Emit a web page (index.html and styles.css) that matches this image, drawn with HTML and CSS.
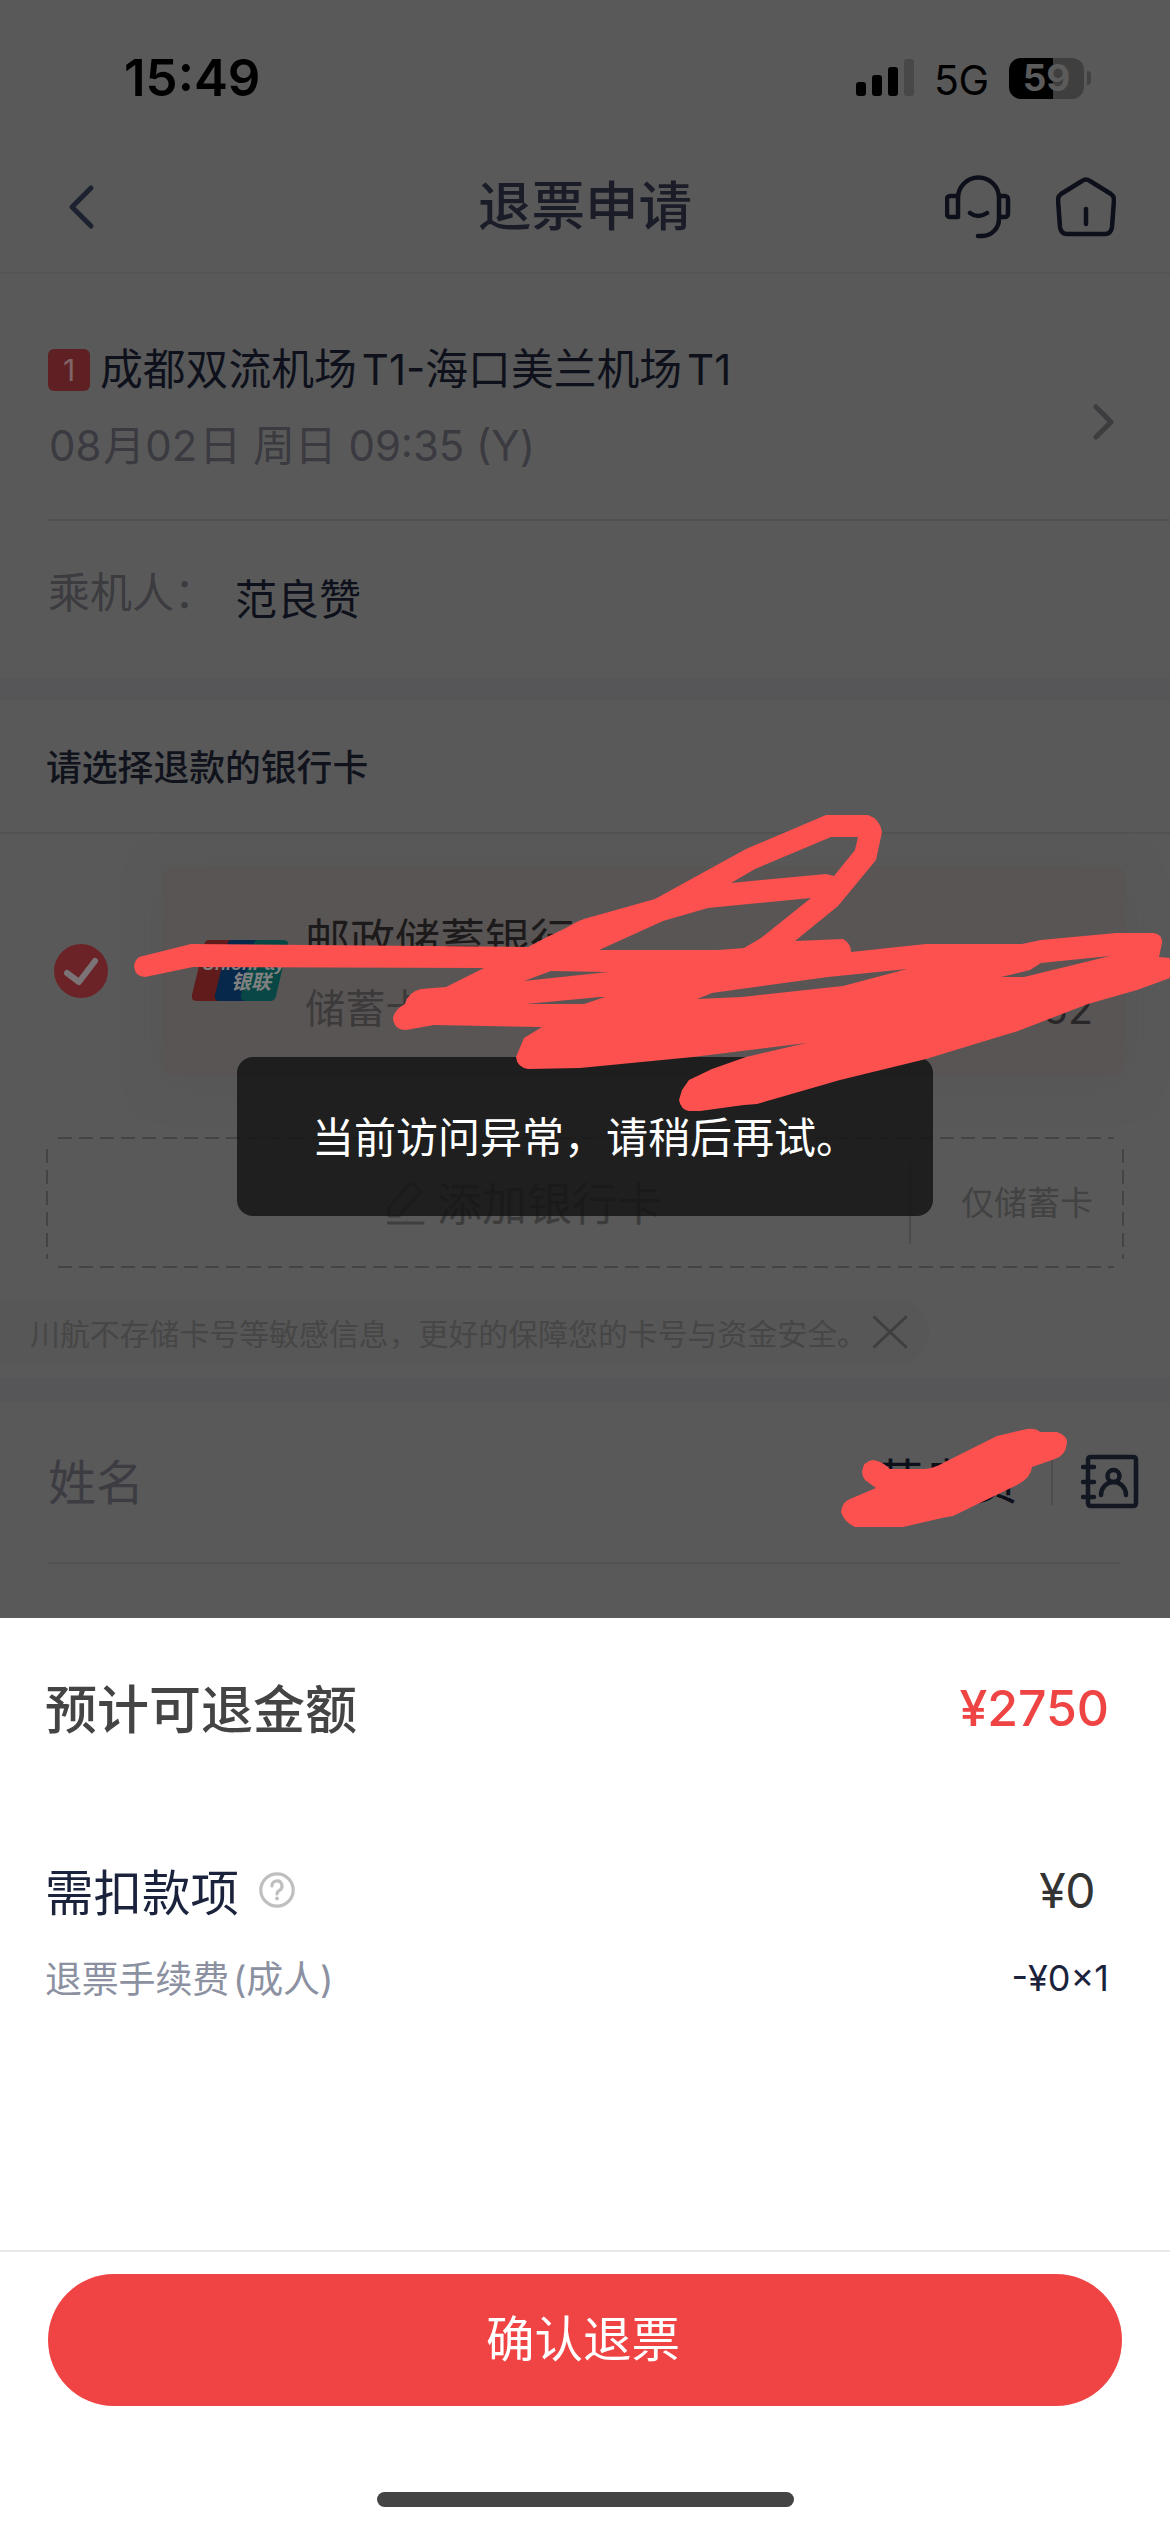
FILE: index.html
```html
<!DOCTYPE html>
<html lang="zh-CN">
<head>
<meta charset="utf-8">
<title>退票申请</title>
<link rel="stylesheet" href="styles.css">
</head>
<body>
<div class="screen">
  <div class="status">
    <span class="clock">15:49</span>
    <div class="status-right">
      <svg class="signal" width="58" height="38" viewBox="0 0 58 38">
        <rect x="0" y="23" width="10" height="14" rx="3"/>
        <rect x="16" y="16" width="10" height="21" rx="3"/>
        <rect x="32" y="8" width="10" height="29" rx="3"/>
        <rect x="48" y="0" width="10" height="37" rx="3" fill="#484848"/>
      </svg>
      <span class="net">5G</span>
      <div class="battery"><span>59</span></div>
      <i class="battery-tip"></i>
    </div>
  </div>

  <header class="nav">
    <svg class="back line" width="30" height="46" viewBox="0 0 30 46"><path d="M24 4 5 23l19 19"/></svg>
    <h1>退票申请</h1>
    <div class="nav-icons">
      <svg class="line" width="66" height="64" viewBox="0 0 66 64">
        <path d="M13 42H5a3 3 0 0 1-3-3V24a3 3 0 0 1 3-3h8V42V23a20 20 0 0 1 41 0V44a17 17 0 0 1-17 17H33M54 21h6a3 3 0 0 1 3 3v15a3 3 0 0 1-3 3h-6M25 38q8 6 17 0"/>
      </svg>
      <svg class="line" width="60" height="60" viewBox="0 0 60 60">
        <path d="M26 4 5 17q-3 2-3 6l2 27q1 7 7 7h38q6 0 7-7l2-27q0-4-3-6L34 4q-4-3-8 0zM30 32v15"/>
      </svg>
    </div>
  </header>

  <section class="flight">
    <div class="flight-info">
      <div>
        <div class="route"><b class="badge">1</b><span>成都双流机场<em>T1-</em>海口美兰机场<em>T1</em></span></div>
        <div class="when">08<i>月</i>02<i>日</i> 周日 09:35 (Y)</div>
      </div>
      <svg class="more line" width="24" height="36" viewBox="0 0 24 36"><path d="m4 3 15 15L4 33"/></svg>
    </div>
    <div class="passenger"><span class="label">乘机人：</span><span class="person">范良赞</span></div>
  </section>

  <h2 class="pick">请选择退款的银行卡</h2>

  <section class="cards">
    <div class="card-row">
      <svg class="check line" width="54" height="54" viewBox="0 0 54 54"><circle cx="27" cy="27" r="27"/><path d="m13 29 12 9 16-21"/></svg>
      <div class="card">
        <svg class="unionpay" width="96" height="62" viewBox="0 0 96 62">
          <path d="M17 0H44L30 61H5Q-1 61 0 55L12 5Q13 0 17 0z" fill="#611b1a"/>
          <path d="M40 0H70L57 61H27Q22 61 23 55L35 5Q36 0 40 0z" fill="#08284b"/>
          <path d="M66 0H91Q97 0 96 5L84 56Q83 61 78 61H54Q48 61 49 55L61 5Q62 0 66 0z" fill="#084745"/>
          <text x="10" y="30" class="up-en">UnionPay</text>
          <text x="39" y="49" class="up-cn">银联</text>
        </svg>
        <div class="card-text">
          <div class="bank">邮政储蓄银行</div>
          <div class="card-meta"><span>储蓄卡</span><span class="tail">52</span></div>
        </div>
      </div>
    </div>
    <div class="add">
      <svg class="dash line" width="1078" height="132" viewBox="0 0 1078 132"><path d="M12 1H1068M12 130H1068M1 12V122M1077 12V122"/></svg>
      <div class="add-main">
        <svg class="line" width="38" height="44" viewBox="0 0 38 44"><path d="M2 35V26L21 4q3-3 6 0l4 4q3 3 0 6L12 35H2M0 42h36"/></svg>
        <span>添加银行卡</span>
      </div>
      <div class="add-side">仅储蓄卡</div>
    </div>
    <div class="notice">
      <span>川航不存储卡号等敏感信息，更好的保障您的卡号与资金安全。</span>
      <svg class="line" width="34" height="32" viewBox="0 0 34 32"><path d="m1 1 32 30M33 1 1 31"/></svg>
    </div>
  </section>

  <section class="name-row">
    <span class="name-label">姓名</span>
    <div class="name-value">
      <span>范良赞</span>
      <svg class="line" width="58" height="56" viewBox="0 0 58 56">
        <path d="M10 3h42q3 0 3 3v43q0 3-3 3H10q-3 0-3-3V6q0-3 3-3zM2 13h11M2 28h11M2 43h11M20 41a12.500 13 0 0 1 25 0"/><circle cx="32.500" cy="22" r="6"/>
      </svg>
    </div>
  </section>

  <section class="sheet">
    <div class="row total"><span>预计可退金额</span><span class="price">¥2750</span></div>
    <div class="row fee">
      <span class="fee-title">需扣款项
        <svg class="line" width="36" height="36" viewBox="0 0 36 36"><circle cx="18" cy="18" r="16.200"/><path d="M13 14a5 5 0 1 1 7.500 4.300q-2.500 1.500-2.500 3.700"/><circle class="dot" cx="18" cy="26.500" r="1.900"/></svg>
      </span>
      <span class="zero">¥0</span>
    </div>
    <div class="row detail"><span>退票手续费<em>(</em>成人)</span><span class="calc">-¥0×1</span></div>
    <div class="footer">
      <button class="confirm">确认退票</button>
      <div class="home-bar"></div>
    </div>
  </section>

  <div class="toast">当前访问异常，请稍后再试。</div>

  <svg class="scribble" width="1170" height="2532" viewBox="0 0 1170 2532">
    <path d="M134 966Q135 960 139 957L191 944 528 947Q546 937 566 928 578 920 591 917L655 899 746 849 826 815H868Q880 819 882 832L876 860 838 906 795 941 843 939Q851 943 851 952L926 944H1022L1041 940 1116 933H1154Q1163 935 1162 943L1159 957 1170 958V978L1137 990 1088 1004 1018 1031 975 1044 926 1059 840 1080 757 1104 744 1105 700 1111H689Q681 1110 679 1100L682 1090 689 1080 712 1069 746 1057 806 1043 693 1057 580 1068 528 1069Q517 1067 516 1057L524 1038 542 1027 486 1026 434 1025 406 1030Q394 1030 393 1018 395 1009 405 1004 408 992 421 989L446 987 484 968 193 967 145 977Q135 977 134 966zM731 883 755 869 831 837H858L855 850 834 876 826 874zM708 908 811 898 761 938 744 948 719 950H599L663 921zM524 981 551 971 608 972zM526 1004 600 997H605L584 1004zM697 999 712 993 828 977 907 969 843 986 742 997zM1001 977 1030 970 1041 963 1110 956 1024 977z"/>
    <path d="M862 1472Q863 1461 873 1460 882 1461 890 1469H925Q935 1468 943 1463L997 1436 1027 1429Q1036 1428 1040 1432H1057Q1068 1436 1067 1443 1066 1455 1055 1459L1032 1467Q1031 1478 1017 1485L953 1516 942 1518 903 1527H855Q844 1522 841 1512 842 1502 850 1499L876 1488 865 1480Q862 1476 862 1472z"/>
  </svg>
</div>
</body>
</html>
```
FILE: styles.css
```css
* { box-sizing: border-box; margin: 0; padding: 0; }
body {
  width: 1170px;
  height: 2532px;
  overflow: hidden;
  font-family: "Inter", "Noto Sans CJK SC", sans-serif;
  background: #595959;
}
em, i { font-style: normal; }
svg { display: block; flex: none; }
.line path, .line circle { fill: none; stroke-linecap: round; stroke-linejoin: round; }
.screen { position: relative; display: flex; flex-direction: column; height: 2532px; white-space: nowrap; }

/* status bar */
.status { display: flex; justify-content: space-between; align-items: center; height: 130px; padding: 26px 79px 0 124px; }
.clock { font-size: 51px; font-weight: 600; line-height: 60px; color: #000; }
.status-right { display: flex; align-items: center; }
.net { margin-left: 20px; font-size: 41px; line-height: 50px; font-weight: 400; letter-spacing: -.5px; margin-top: 4px; width: 55px; }
.battery { display: flex; justify-content: center; align-items: center; width: 75px; height: 41px; margin-left: 20px; border-radius: 12px; background: linear-gradient(90deg, #000 44px, #3f3f3f 44px); color: #5b5b5b; font-size: 37px; font-weight: 700; line-height: 40px; }
.battery-tip { width: 4px; height: 14px; margin-left: 3px; border-radius: 0 4px 4px 0; background: #424242; }

/* navigation */
.nav { display: flex; align-items: center; justify-content: space-between; height: 144px; padding: 12px 54px 0 67px; border-bottom: 2px solid #545454; }
.nav h1 { font-size: 53.500px; font-weight: 500; line-height: 64px; color: #1a1c28; margin-left: 128px; }
.nav-icons { display: flex; align-items: center; gap: 45px; }
.back path { stroke: #1d2230; stroke-width: 5; }
.nav-icons path { stroke: #0d101b; stroke-width: 4.500; }

/* flight */
.flight { height: 426px; padding-left: 48px; border-bottom: 22px solid #565659; }
.flight-info { display: flex; justify-content: space-between; align-items: center; height: 247px; padding: 45px 54px 24px 0; border-bottom: 2px solid #515151; }
.route { display: flex; align-items: center; height: 60px; gap: 10px; font-size: 42.800px; line-height: 60px; color: #0e111b; }
.route span { height: 60px; }
.route em { font-size: 42px; padding-left: 5px; }
.badge { display: flex; align-items: center; justify-content: center; width: 42px; height: 42px; border-radius: 6px; background: #5f2023; color: #7f6568; font-size: 30px; font-weight: 400; }
.when { height: 60px; margin-top: 15px; padding-left: 1px; font-size: 41.900px; line-height: 62px; color: #3a3a40; }
.when i { padding-left: 2px; }
.more { margin-top: 30px; }
.more path { stroke: #3d3d3f; stroke-width: 5; }
.passenger { display: flex; font-size: 42px; line-height: 60px; padding-top: 42px; }
.label { width: 187px; color: #3b3b40; }
.person { margin-top: 7px; color: #0e111b; }
.pick { height: 134px; padding-left: 46px; font-size: 35.800px; font-weight: 500; line-height: 137px; color: #10131c; border-bottom: 2px solid #525252; }

/* bank cards */
.cards { height: 568px; padding-top: 32px; border-bottom: 24px solid #565658; }
.card-row { display: flex; align-items: center; height: 210px; padding-left: 54px; }
.check circle { fill: #6c2327; stroke: none; }
.check path { stroke: #7b7476; stroke-width: 6; }
.card { display: flex; width: 964px; height: 210px; margin-left: 54px; border-radius: 14px; background: #595554; box-shadow: 0 8px 36px rgba(86, 85, 86, .7); padding: 0 35px 0 30px; }
.unionpay { margin-top: 74px; }
.unionpay text { font-weight: 700; font-style: italic; fill: #818181; }
.up-en { font-family: "Liberation Sans", Arial, sans-serif; font-size: 18px; }
.up-cn { font-size: 20px; }
.card-text { flex: 1; margin-left: 17px; padding-top: 44px; }
.bank { font-size: 45px; line-height: 62px; color: #1c1a1a; }
.card-meta { display: flex; justify-content: space-between; margin-top: 7px; font-size: 40.200px; line-height: 60px; color: #3d3a3b; }
.tail { font-size: 41px; margin-right: -2px; color: #292728; }
.add { position: relative; display: flex; width: 1078px; height: 132px; margin: 61px 0 0 46px; align-items: center; }
.dash { position: absolute; inset: 0; }
.dash path { stroke: #444; stroke-width: 2; stroke-dasharray: 14 7; stroke-linecap: butt; }
.add-main { display: flex; align-items: center; justify-content: center; gap: 12px; width: 865px; height: 82px; padding-left: 94px; border-right: 2px solid #4b4b4b; font-size: 45px; color: #3c3c3c; }
.add-main span { margin-top: -4px; }
.add-main path { stroke: #3f3f3f; stroke-width: 3; }
.add-side { padding-left: 50px; margin-top: -4px; font-size: 33px; color: #424242; }
.notice { display: flex; align-items: center; width: 929px; height: 64px; margin-top: 31px; padding-left: 30px; gap: 6px; border-radius: 0 32px 32px 0; background: #575757; font-size: 29.900px; color: #464646; }
.notice path { stroke: #3f3f3f; stroke-width: 3; }

/* name */
.name-row { display: flex; justify-content: space-between; height: 162px; margin-left: 48px; width: 1073px; border-bottom: 2px solid #535353; font-size: 48px; line-height: 161px; }
.name-label { color: #3c3c42; }
.name-value { display: flex; align-items: center; margin-right: -18px; color: #0d101a; }
.name-value span { height: 46px; line-height: 46px; padding-right: 32px; margin-right: 28px; border-right: 2px solid #4c4c4c; }
.name-value path, .name-value circle { stroke: #131722; stroke-width: 4.500; }

/* refund sheet */
.sheet { display: flex; flex-direction: column; height: 914px; margin-top: auto; background: #fff; }
.row { display: flex; align-items: center; justify-content: space-between; padding: 0 61px 0 45px; }
.total { height: 80px; margin-top: 50px; font-size: 52px; font-weight: 500; color: #444; }
.total span:first-child { margin-top: -4px; }
.price { color: #ef4444; font-size: 50px; font-weight: 500; letter-spacing: -.1px; }
.fee { height: 70px; margin-top: 107px; padding-right: 75px; font-size: 48.500px; color: #1a233b; }
.fee-title { display: flex; align-items: center; gap: 20px; margin-top: -1px; }
.fee-title path, .fee-title circle { stroke: #bfbfbf; stroke-width: 3.200; }
.fee-title .dot { fill: #bfbfbf; stroke: none; }
.zero { color: #333; font-size: 48px; letter-spacing: -.5px; }
.detail { height: 60px; margin-top: 23px; font-size: 37px; color: #8c91a1; }
.detail span:first-child { letter-spacing: -.2px; margin-top: -2px; }
.detail em { padding-left: 4px; }
.calc { color: #1a233b; font-size: 36px; }
.footer { margin-top: auto; height: 282px; padding: 22px 48px 0; border-top: 2px solid #eaeaea; }
.confirm { display: block; width: 1074px; height: 132px; padding-right: 4px; border: 0; border-radius: 66px; background: #f04444; color: #fff; font: 400 48.500px/132px "Inter", "Noto Sans CJK SC", sans-serif; }
.home-bar { width: 417px; height: 15px; margin: 86px auto 0; border-radius: 8px; background: #444; }

/* layers over the page */
.toast { position: absolute; left: 237px; top: 1057px; width: 696px; height: 159px; border-radius: 16px; background: rgba(20, 20, 20, .84); color: #fff; font-size: 42px; line-height: 162px; text-align: center; }
.scribble { position: absolute; left: 0; top: 0; }
.scribble path { fill: #fd5150; fill-rule: evenodd; }
```
